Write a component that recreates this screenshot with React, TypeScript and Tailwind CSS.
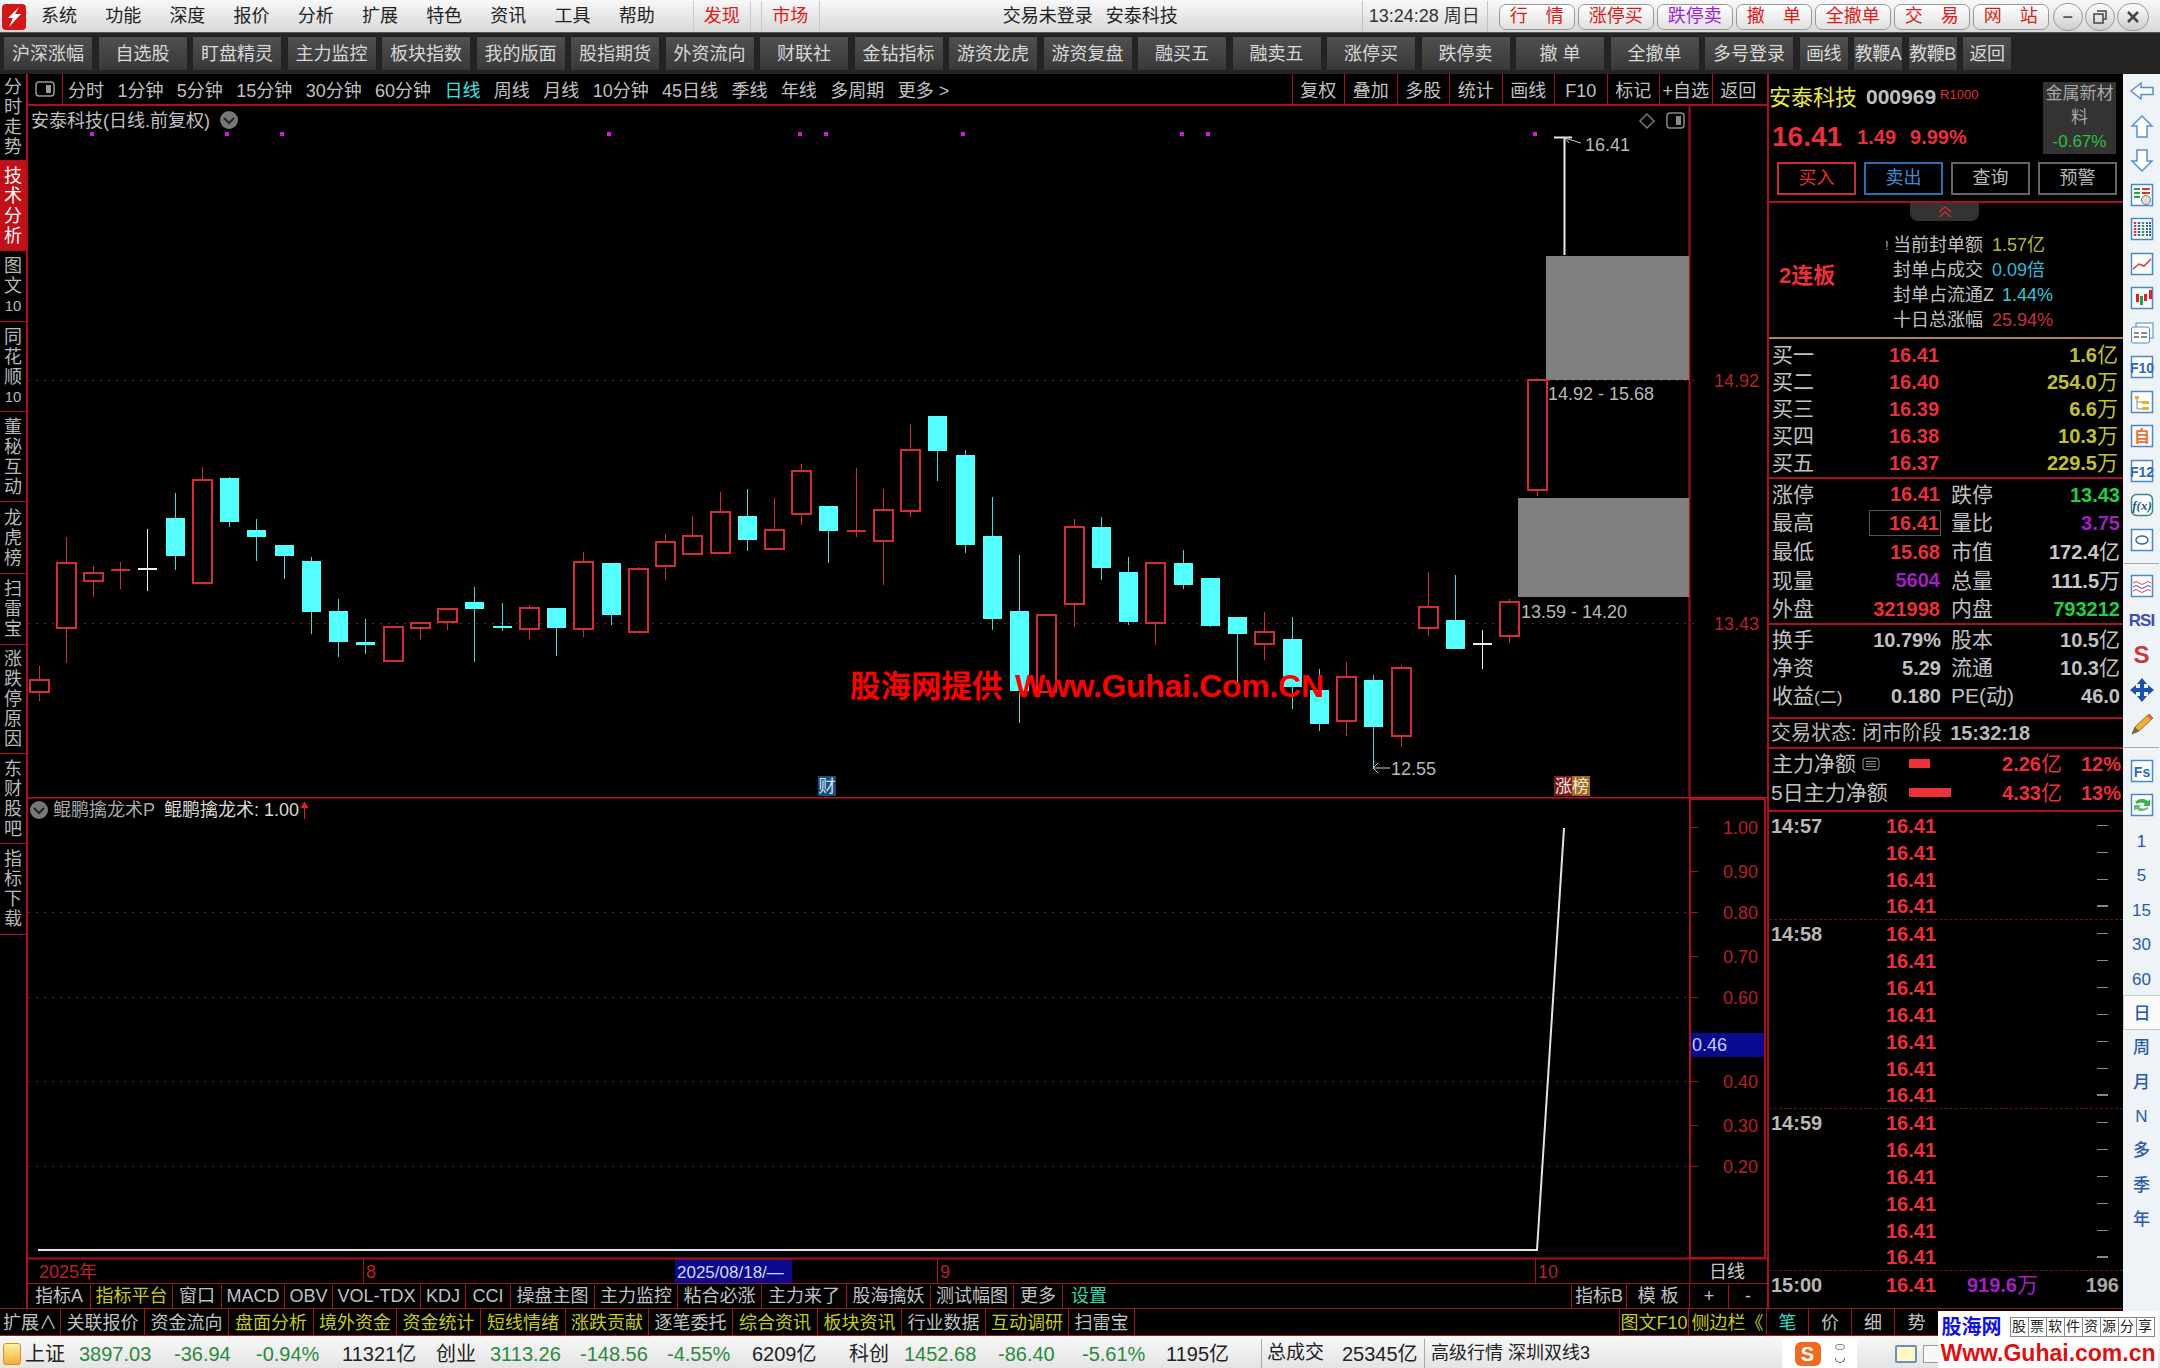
import React from "react";

const RED = "#a8121c";

const menus = ["系统", "功能", "深度", "报价", "分析", "扩展", "特色", "资讯", "工具", "帮助"];
const quick = [
  { t: "行　情", c: "text-[#e01818]" },
  { t: "涨停买", c: "text-[#e01818]" },
  { t: "跌停卖", c: "text-[#9a1fe0]" },
  { t: "撤　单", c: "text-[#e01818]" },
  { t: "全撤单", c: "text-[#e01818]" },
  { t: "交　易", c: "text-[#e01818]" },
  { t: "网　站", c: "text-[#e01818]" },
];
const tools = ["沪深涨幅", "自选股", "盯盘精灵", "主力监控", "板块指数", "我的版面", "股指期货", "外资流向", "财联社", "金钻指标", "游资龙虎", "游资复盘", "融买五", "融卖五", "涨停买", "跌停卖", "撤 单", "全撤单", "多号登录"];
const periods = ["分时", "1分钟", "5分钟", "15分钟", "30分钟", "60分钟", "日线", "周线", "月线", "10分钟", "45日线", "季线", "年线", "多周期", "更多 >"];
const chartTools = ["复权", "叠加", "多股", "统计", "画线", "F10", "标记", "+自选", "返回"];

const sideTabs = [
  { l: ["分", "时", "走", "势"], h: "h-[87px]" },
  { l: ["技", "术", "分", "析"], h: "h-[90px]", on: true },
  { l: ["图", "文", "10"], h: "h-[71px]" },
  { l: ["同", "花", "顺", "10"], h: "h-[90px]" },
  { l: ["董", "秘", "互", "动"], h: "h-[90px]" },
  { l: ["龙", "虎", "榜"], h: "h-[72px]" },
  { l: ["扫", "雷", "宝"], h: "h-[71px]" },
  { l: ["涨", "跌", "停", "原", "因"], h: "h-[109px]" },
  { l: ["东", "财", "股", "吧"], h: "h-[90px]" },
  { l: ["指", "标", "下", "载"], h: "h-[91px]" },
];

// [wickTop, bodyTop, bodyBottom, wickBottom, colour]
type Bar = [number, number, number, number, "r" | "c" | "w"];
const bars: Bar[] = [
  [666, 680, 692, 701, "r"], [537, 563, 628, 663, "r"], [566, 573, 581, 597, "r"], [562, 569, 571, 589, "r"],
  [529, 568, 569, 591, "w"], [493, 518, 556, 570, "c"], [467, 480, 583, 584, "r"], [477, 478, 522, 527, "c"],
  [519, 530, 537, 561, "c"], [545, 545, 556, 579, "c"], [557, 561, 612, 634, "c"], [599, 611, 642, 657, "c"],
  [619, 642, 645, 654, "c"], [627, 627, 661, 662, "r"], [623, 623, 628, 640, "r"], [609, 609, 622, 630, "r"],
  [587, 602, 609, 662, "c"], [603, 626, 628, 631, "c"], [605, 608, 629, 639, "r"], [608, 608, 628, 656, "c"],
  [552, 562, 629, 637, "r"], [563, 563, 615, 625, "c"], [567, 569, 632, 632, "r"], [534, 542, 566, 580, "r"],
  [516, 536, 554, 555, "r"], [492, 512, 553, 553, "r"], [489, 516, 540, 551, "c"], [498, 530, 549, 549, "r"],
  [464, 471, 514, 525, "r"], [506, 506, 531, 563, "c"], [468, 530, 532, 537, "r"], [489, 510, 541, 585, "r"],
  [424, 450, 511, 517, "r"], [416, 416, 451, 481, "c"], [450, 455, 545, 553, "c"], [497, 536, 619, 630, "c"],
  [555, 611, 691, 723, "c"], [615, 615, 692, 692, "r"], [519, 527, 604, 627, "r"], [517, 527, 568, 580, "c"],
  [557, 572, 622, 625, "c"], [563, 563, 623, 645, "r"], [550, 563, 585, 589, "c"], [578, 578, 626, 627, "c"],
  [617, 617, 634, 682, "c"], [612, 632, 644, 660, "r"], [617, 639, 687, 709, "c"], [669, 690, 724, 731, "c"],
  [662, 677, 721, 736, "r"], [675, 680, 727, 768, "c"], [665, 668, 736, 747, "r"], [572, 607, 628, 636, "r"],
  [575, 620, 649, 649, "c"], [630, 643, 644, 669, "w"], [599, 602, 636, 643, "r"], [378, 380, 490, 496, "r"],
];
const dots = [92, 227, 282, 609, 800, 826, 963, 1182, 1208, 1535];

const tabRow1 = [
  { t: "指标A", w: "w-[63px]" }, { t: "指标平台", w: "w-[82px]", c: "text-[#c8c820]" }, { t: "窗口", w: "w-[49px]" },
  { t: "MACD", w: "w-[63px]" }, { t: "OBV", w: "w-[48px]" }, { t: "VOL-TDX", w: "w-[88px]" }, { t: "KDJ", w: "w-[45px]" },
  { t: "CCI", w: "w-[45px]" }, { t: "操盘主图", w: "w-[84px]" }, { t: "主力监控", w: "w-[83px]" }, { t: "粘合必涨", w: "w-[84px]" },
  { t: "主力来了", w: "w-[85px]" }, { t: "股海擒妖", w: "w-[84px]" }, { t: "测试幅图", w: "w-[83px]" }, { t: "更多", w: "w-[49px]" },
];
const tabRow2 = [
  { t: "扩展∧", w: "w-[61px]" }, { t: "关联报价", w: "w-[84px]" }, { t: "资金流向", w: "w-[84px]" },
  { t: "盘面分析", w: "w-[85px]", y: true }, { t: "境外资金", w: "w-[83px]", y: true }, { t: "资金统计", w: "w-[84px]", y: true },
  { t: "短线情绪", w: "w-[85px]", y: true }, { t: "涨跌贡献", w: "w-[83px]", y: true }, { t: "逐笔委托", w: "w-[84px]" },
  { t: "综合资讯", w: "w-[85px]", y: true }, { t: "板块资讯", w: "w-[84px]", y: true }, { t: "行业数据", w: "w-[84px]" },
  { t: "互动调研", w: "w-[83px]", y: true }, { t: "扫雷宝", w: "w-[66px]" },
];

const bids = [
  ["买一", "16.41", "1.6", "亿"], ["买二", "16.40", "254.0", "万"], ["买三", "16.39", "6.6", "万"],
  ["买四", "16.38", "10.3", "万"], ["买五", "16.37", "229.5", "万"],
];
const quotes = [
  { a: "涨停", b: "16.41", ac: "text-[#e8303a]", c: "跌停", d: "13.43", dc: "text-[#20d040]" },
  { a: "最高", b: "16.41", ac: "text-[#e8303a]", c: "量比", d: "3.75", dc: "text-[#a020c0]", box: true },
  { a: "最低", b: "15.68", ac: "text-[#e8303a]", c: "市值", d: "172.4", u: "亿", dc: "text-[#c8c8c8]" },
  { a: "现量", b: "5604", ac: "text-[#a020c0]", c: "总量", d: "111.5", u: "万", dc: "text-[#c8c8c8]" },
  { a: "外盘", b: "321998", ac: "text-[#e8303a]", c: "内盘", d: "793212", dc: "text-[#20d040]" },
];
const ticks = [
  "14:57", "", "", "", "14:58", "", "", "", "", "", "", "14:59", "", "", "", "", "", "15:00",
];

function Ico({ children }: { children: React.ReactNode }) {
  return <svg width="26" height="26" viewBox="0 0 26 26">{children}</svg>;
}
function Frame() {
  return <rect x="2.5" y="2.5" width="21" height="21" fill="#fff" stroke="#4a86c8" strokeWidth="1.5" />;
}
function FrameText({ t }: { t: string }) {
  return (
    <Ico>
      <Frame />
      <text x="13" y="18.5" textAnchor="middle" fontSize="14" fontWeight="700" fill="#2a6ab8" fontFamily="Liberation Sans">{t}</text>
    </Ico>
  );
}

const sideIcons: React.ReactNode[] = [
  <Ico><path d="M2 13 L12 5 V9.5 H24 V16.5 H12 V21 Z" fill="#fff" stroke="#5a90d0" strokeWidth="1.5" /></Ico>,
  <Ico><path d="M13 3 L23 13 H18 V24 H8 V13 H3 Z" fill="#fff" stroke="#5a90d0" strokeWidth="1.5" /></Ico>,
  <Ico><path d="M13 24 L23 14 H18 V3 H8 V14 H3 Z" fill="#fff" stroke="#5a90d0" strokeWidth="1.5" /></Ico>,
  <Ico><Frame /><path d="M5 7h6M5 11h6M5 15h6" stroke="#2aa040" strokeWidth="2" /><path d="M13 7h8M13 11h8" stroke="#e03030" strokeWidth="2" /><circle cx="17" cy="18" r="4.5" fill="#ddd" stroke="#777" /></Ico>,
  <Ico><Frame /><path d="M6 6v14" stroke="#e03030" strokeWidth="2.5" strokeDasharray="2 1" /><path d="M10 6v14" stroke="#2a60c0" strokeWidth="2.5" strokeDasharray="2 1" /><path d="M14 6v14" stroke="#2aa040" strokeWidth="2.5" strokeDasharray="2 1" /><path d="M18 6v14M21 6v14" stroke="#2a60c0" strokeWidth="2" strokeDasharray="2 1" /></Ico>,
  <Ico><Frame /><path d="M4 18 L10 13 L15 15 L22 8" fill="none" stroke="#e03030" strokeWidth="1.5" /></Ico>,
  <Ico><Frame /><path d="M7 9h3v8H7zM15 9h3v7h-3z" fill="#e02020" /><path d="M11 11h3v9h-3z" fill="#20a040" /><path d="M20 5h3v9h-3z" fill="#e02020" /></Ico>,
  <Ico><rect x="7" y="3" width="17" height="15" fill="#fff" stroke="#4a86c8" /><rect x="2.5" y="7" width="18" height="16" rx="2" fill="#fff" stroke="#4a86c8" /><path d="M5 13h5M12 13h6M5 17h5M12 17h6" stroke="#888" strokeWidth="2" /></Ico>,
  <FrameText t="F10" />,
  <Ico><Frame /><path d="M6 7h4v3H6zM13 12h7v3h-7zM13 18h7v3h-7z" fill="#e0b030" /><path d="M8 10v10h5M8 13h5" fill="none" stroke="#888" /></Ico>,
  <Ico><Frame /><text x="13" y="19" textAnchor="middle" fontSize="16" fontWeight="700" fill="#f07030" fontFamily="Noto Sans CJK SC">自</text></Ico>,
  <FrameText t="F12" />,
  <Ico><rect x="2.5" y="2.5" width="21" height="21" rx="5" fill="#fff" stroke="#3a8a7a" strokeWidth="1.5" /><text x="13" y="18" textAnchor="middle" fontSize="13" fontStyle="italic" fontWeight="700" fill="#1a5a8a" fontFamily="Liberation Serif">f(x)</text></Ico>,
  <Ico><Frame /><ellipse cx="13" cy="13" rx="6" ry="4" fill="none" stroke="#2a6ab8" strokeWidth="1.5" /></Ico>,
];
const sideIcons2: React.ReactNode[] = [
  <Ico><Frame /><path d="M4 10 q3-3 6 0 t6 0 t6 0" fill="none" stroke="#e04040" /><path d="M4 14 q3-3 6 0 t6 0 t6 0" fill="none" stroke="#4040e0" /><path d="M4 18 q3-3 6 0 t6 0 t6 0" fill="none" stroke="#e04040" /></Ico>,
  <span className="text-[17px] font-bold tracking-[-1px] text-[#3a50b0]">RSI</span>,
  <span className="text-[24px] font-bold leading-none text-[#c83a3a]">S</span>,
  <Ico><path d="M13 1 L18 7 H15 V11 H19 V8 L25 13 L19 18 V15 H15 V19 H18 L13 25 L8 19 H11 V15 H7 V18 L1 13 L7 8 V11 H11 V7 H8 Z" fill="#1a50b0" /></Ico>,
  <Ico><path d="M3 23 L6 16 L20 3 L24 7 L10 20 Z" fill="#f0b030" stroke="#a06a20" /><path d="M20 3 L24 7 L22 9 L18 5 Z" fill="#e06060" /><path d="M3 23 L6 16 L10 20 Z" fill="#666" /></Ico>,
];
const sideIcons3: React.ReactNode[] = [
  <FrameText t="Fs" />,
  <Ico><Frame /><path d="M6 10 q6-6 13-1 l2-2 v7 h-7 l2-2 q-4-3-8 0z" fill="#40b050" /><path d="M20 16 q-6 6-13 1 l-2 2 v-6 h7 l-2 2 q4 3 8 0z" fill="#60c070" /></Ico>,
];
const sideText = ["1", "5", "15", "30", "60", "日", "周", "月", "N", "多", "季", "年"];

function Candles() {
  return (
    <>
      {bars.map((b, i) => {
        const x = Math.round(38.5 + 27.24 * i);
        const [top, bt, bb, bot, k] = b;
        const col = k === "r" ? "#d42c34" : k === "c" ? "#54ffff" : "#f0f0f0";
        const flat = bb - bt <= 3;
        return (
          <g key={i} shapeRendering="crispEdges">
            <line x1={x + 0.5} x2={x + 0.5} y1={top} y2={bot} stroke={k === "c" ? "#48d8d8" : col} strokeWidth="1.5" />
            {flat ? (
              <rect x={x - 9} y={bt} width={19} height={Math.max(bb - bt, 2)} fill={col} />
            ) : (
              <rect x={x - 9} y={bt} width={19} height={bb - bt} fill={k === "c" ? col : "#000"} stroke={k === "c" ? "none" : col} strokeWidth="1.5" />
            )}
          </g>
        );
      })}
    </>
  );
}

function MainChart() {
  return (
    <svg viewBox="28 106 1739 691" width="1739" height="691" className="block" fontFamily="Liberation Sans, Noto Sans CJK SC, sans-serif">
      <line x1="1689.5" x2="1689.5" y1="106" y2="797" stroke={RED} strokeWidth="2" />
      <line x1="28" x2="1700" y1="380.5" y2="380.5" stroke="#7a1a1a" strokeDasharray="2 6" />
      <line x1="28" x2="1700" y1="623.5" y2="623.5" stroke="#7a1a1a" strokeDasharray="2 6" />
      <rect x="1546" y="256" width="143" height="124" fill="#808080" />
      <rect x="1518" y="498" width="171" height="99" fill="#808080" />
      <Candles />
      <line x1="1564.5" x2="1564.5" y1="137" y2="255" stroke="#e8e8e8" strokeWidth="2" />
      <line x1="1554" x2="1572" y1="137.5" y2="137.5" stroke="#e8e8e8" strokeWidth="2" />
      <path d="M1581 143 L1565 138 M1570 137 L1565 138 L1569 143" stroke="#c8c8c8" fill="none" />
      <text x="1585" y="151" fontSize="18" fill="#b8b8b8">16.41</text>
      <text x="1548" y="400" fontSize="18" fill="#b8b8b8">14.92 - 15.68</text>
      <text x="1521" y="618" fontSize="18" fill="#b8b8b8">13.59 - 14.20</text>
      <path d="M1390 768 H1373 M1378 763 L1373 768 L1378 773" stroke="#c8c8c8" fill="none" />
      <text x="1391" y="775" fontSize="18" fill="#b8b8b8">12.55</text>
      <text x="1714" y="387" fontSize="18" fill="#b82028">14.92</text>
      <text x="1714" y="630" fontSize="18" fill="#b82028">13.43</text>
      {dots.map((x) => (
        <rect key={x} x={x - 2} y={132} width={4} height={4} fill="#e010e0" />
      ))}
      <text x="31" y="127" fontSize="18" fill="#c0c0c0">安泰科技(日线.前复权)</text>
      <circle cx="229" cy="120" r="9" fill="#777" />
      <path d="M224 118 L229 123 L234 118" fill="none" stroke="#222" strokeWidth="2" />
      <path d="M1647 114 L1654 121 L1647 128 L1640 121 Z" fill="none" stroke="#777" strokeWidth="1.5" />
      <rect x="1667" y="113" width="17" height="15" rx="3" fill="none" stroke="#888" strokeWidth="1.5" />
      <rect x="1676" y="116" width="5" height="9" fill="#888" />
      <rect x="818" y="776" width="18" height="20" fill="#1a4a80" />
      <text x="827" y="792" fontSize="17" textAnchor="middle" fill="#d8e8f8">财</text>
      <rect x="1554" y="776" width="18" height="20" fill="#7a1a1a" />
      <rect x="1572" y="776" width="18" height="20" fill="#a06a20" />
      <text x="1572" y="792" fontSize="17" textAnchor="middle" fill="#f0e8e0">涨榜</text>
      <text x="850" y="697" fontSize="30.5" fontWeight="700" fill="#ff0000" fontFamily="Noto Sans CJK SC, sans-serif">股海网提供</text>
      <text x="1015" y="697" fontSize="32" fontWeight="700" fill="#ff0000" textLength="309">Www.Guhai.Com.CN</text>
    </svg>
  );
}

function SubChart() {
  const levels = [
    [827, "1.00"], [871, "0.90"], [912, "0.80"], [956, "0.70"], [997, "0.60"], [1081, "0.40"], [1125, "0.30"], [1166, "0.20"],
  ] as [number, string][];
  return (
    <svg viewBox="28 797 1739 486" width="1739" height="486" className="block" fontFamily="Liberation Sans, Noto Sans CJK SC, sans-serif">
      <line x1="28" x2="1767" y1="797.5" y2="797.5" stroke="#c01420" strokeWidth="2" />
      <rect x="1690" y="799" width="75" height="459" fill="none" stroke={RED} strokeWidth="2" />
      <line x1="28" x2="1767" y1="1258.5" y2="1258.5" stroke={RED} strokeWidth="2" />
      {[912, 997, 1081, 1166].map((y) => (
        <line key={y} x1="28" x2="1689" y1={y + 0.5} y2={y + 0.5} stroke="#7a1a1a" strokeDasharray="2 6" />
      ))}
      {levels.map(([y, t]) => (
        <g key={t}>
          <line x1="1690" x2="1698" y1={y + 0.5} y2={y + 0.5} stroke={RED} />
          <text x="1723" y={y + 7} fontSize="18" fill="#b82028">{t}</text>
        </g>
      ))}
      <rect x="1691" y="1033" width="73" height="24" fill="#0a0a90" />
      <text x="1692" y="1051" fontSize="18" fill="#c8c8f0">0.46</text>
      <polyline points="38,1250 1537,1250 1564,828" fill="none" stroke="#e4e4e4" strokeWidth="2" />
      <circle cx="39" cy="810" r="9" fill="#777" />
      <path d="M34 808 L39 813 L44 808" fill="none" stroke="#222" strokeWidth="2" />
      <text x="53" y="816" fontSize="18" fill="#a8a8a8">鲲鹏擒龙术P</text>
      <text x="164" y="816" fontSize="18" fill="#d8d8d8">鲲鹏擒龙术: 1.00</text>
      <path d="M304.5 819 V804 M301 808 L304.5 802 L308 808" fill="#e02020" stroke="#e02020" />
      <text x="39" y="1278" fontSize="18" fill="#b82028">2025年</text>
      {[363, 937, 1535].map((x, i) => (
        <g key={x}>
          <line x1={x + 0.5} x2={x + 0.5} y1="1259" y2="1283" stroke={RED} />
          <text x={x + 3} y="1278" fontSize="18" fill="#b82028">{["8", "9", "10"][i]}</text>
        </g>
      ))}
      <rect x="675" y="1260" width="117" height="23" fill="#0a0a90" />
      <line x1="675" x2="792" y1="1259" y2="1259" stroke={RED} />
      <text x="677" y="1278" fontSize="17" fill="#d8d8f0">2025/08/18/—</text>
      <line x1="1690" x2="1690" y1="1259" y2="1283" stroke={RED} />
      <text x="1727" y="1278" fontSize="18" textAnchor="middle" fill="#c8c8c8">日线</text>
    </svg>
  );
}

function InfoPanel() {
  return (
    <div className="flex w-[356px] flex-col border-l-2 border-[#a8121c] bg-black">
      <div className="h-[129px] border-b-2 border-[#a8121c]">
        <div className="flex h-[88px]">
          <div className="w-[274px]">
            <div className="flex h-[46px] items-center">
              <span className="text-[22px] text-[#e8e840]">安泰科技</span>
              <span className="ml-[9px] text-[21px] font-bold text-[#c0c0c0]">000969</span>
              <span className="mb-[4px] ml-[4px] text-[13px] text-[#e03030]">R1000</span>
            </div>
            <div className="flex h-[34px] items-center font-bold text-[#e8303a]">
              <span className="ml-[3px] text-[28px]">16.41</span>
              <span className="ml-[15px] text-[20px]">1.49</span>
              <span className="ml-[14px] text-[20px]">9.99%</span>
            </div>
          </div>
          <div className="mt-[8px] flex h-[72px] w-[73px] flex-col items-center bg-[#333] text-[17px] leading-[24px] text-[#a8a8a8]">
            <span>金属新材</span>
            <span>料</span>
            <span className="text-[#2ec040]">-0.67%</span>
          </div>
        </div>
        <div className="flex gap-[8px] pl-[8px] text-[18px]">
          <div className="flex h-[33px] w-[79px] items-center justify-center border-2 border-[#c83030] text-[#e03030]">买入</div>
          <div className="flex h-[33px] w-[79px] items-center justify-center border-2 border-[#2a70b0] text-[#3a90d8]">卖出</div>
          <div className="flex h-[33px] w-[79px] items-center justify-center border-2 border-[#666] text-[#b8b8b8]">查询</div>
          <div className="flex h-[33px] w-[79px] items-center justify-center border-2 border-[#666] text-[#b8b8b8]">预警</div>
        </div>
      </div>
      <div className="relative flex h-[136px] border-b-2 border-[#a88850]">
        <div className="absolute left-[141px] top-0 flex h-[18px] w-[69px] items-center justify-center rounded-b-lg bg-[#333]">
          <svg width="16" height="12" viewBox="0 0 16 12">
            <path d="M2 6 L8 1 L14 6 M2 11 L8 6 L14 11" fill="none" stroke="#c83030" strokeWidth="1.5" />
          </svg>
        </div>
        <div className="w-[124px] pl-[10px] pt-[60px] text-[22px] font-bold leading-[26px] text-[#e8303a]">2连板</div>
        <div className="pt-[30px] text-[18px] leading-[25px] text-[#c0c0c0]">
          <div className="relative">
            <span className="absolute -left-[8px] text-[13px] text-[#b0b0b0]">!</span>
            当前封单额<span className="ml-[9px] text-[#b8b830]">1.57亿</span>
          </div>
          <div>封单占成交<span className="ml-[9px] text-[#30b8d8]">0.09倍</span></div>
          <div>封单占流通Z<span className="ml-[8px] text-[#30c8d8]">1.44%</span></div>
          <div>十日总涨幅<span className="ml-[9px] text-[#c83038]">25.94%</span></div>
        </div>
      </div>
      <div className="h-[140px] border-b-2 border-[#a8121c] pt-[2px]">
        {bids.map((b) => (
          <div key={b[0]} className="flex h-[27px] items-center">
            <span className="w-[120px] pl-[3px] text-[21px] text-[#c0c0c0]">{b[0]}</span>
            <span className="w-[50px] text-right text-[20px] font-bold text-[#e8303a]">{b[1]}</span>
            <span className="w-[179px] text-right text-[20px] font-bold text-[#c0c030]">
              {b[2]}<span className="text-[21px] font-normal">{b[3]}</span>
            </span>
          </div>
        ))}
      </div>
      <div className="h-[146px] border-b-2 border-[#a8121c] pt-[1px]">
        {quotes.map((q) => (
          <div key={q.a} className="flex h-[28.7px] items-center">
            <span className="w-[100px] pl-[3px] text-[21px] text-[#c0c0c0]">{q.a}</span>
            <span className={`flex h-[26px] w-[72px] items-center justify-end pr-[1px] text-[20px] font-bold ${q.ac} ${q.box ? "border border-[#555]" : ""}`}>{q.b}</span>
            <span className="w-[10px]" />
            <span className="w-[60px] text-[21px] text-[#c0c0c0]">{q.c}</span>
            <span className={`w-[109px] text-right text-[20px] font-bold ${q.dc}`}>
              {q.d}<span className="text-[21px] font-normal">{q.u}</span>
            </span>
          </div>
        ))}
      </div>
      <div className="h-[94px] border-b-2 border-[#a8121c] pt-[1px]">
        {[
          ["换手", "10.79%", "股本", "10.5", "亿"],
          ["净资", "5.29", "流通", "10.3", "亿"],
          ["收益", "0.180", "PE(动)", "46.0", ""],
        ].map((r, i) => (
          <div key={r[0]} className="flex h-[28px] items-center text-[#c0c0c0]">
            <span className="w-[100px] pl-[3px] text-[21px]">
              {r[0]}{i === 2 && <span className="text-[17px]">(二)</span>}
            </span>
            <span className="w-[72px] text-right text-[20px] font-bold">{r[1]}</span>
            <span className="w-[10px]" />
            <span className="w-[60px] whitespace-nowrap text-[21px]">{r[2]}</span>
            <span className="w-[109px] text-right text-[20px] font-bold">
              {r[3]}<span className="text-[21px] font-normal">{r[4]}</span>
            </span>
          </div>
        ))}
      </div>
      <div className="flex h-[30px] items-center border-b-2 border-[#a8121c] pl-[2px] text-[20px] text-[#b8b8b8]">
        交易状态: 闭市阶段<span className="ml-[8px] font-bold">15:32:18</span>
      </div>
      <div className="h-[63px] border-b-2 border-[#a8121c]">
        <div className="flex h-[29px] items-center">
          <span className="flex w-[140px] items-center pl-[3px] text-[21px] text-[#c0c0c0]">
            主力净额
            <svg width="18" height="14" viewBox="0 0 18 14" className="ml-[6px]">
              <rect x="1" y="1" width="16" height="12" rx="3" fill="none" stroke="#999" />
              <path d="M4 4.5h10M4 7h10M4 9.5h10" stroke="#999" />
            </svg>
          </span>
          <span className="h-[9px] w-[21px] bg-[#f03038]" />
          <span className="w-[132px] text-right text-[20px] font-bold text-[#e8303a]">2.26<span className="text-[21px] font-normal">亿</span></span>
          <span className="w-[59px] text-right text-[20px] font-bold text-[#e8303a]">12%</span>
        </div>
        <div className="flex h-[29px] items-center">
          <span className="w-[140px] pl-[2px] text-[21px] text-[#c0c0c0]">5日主力净额</span>
          <span className="h-[9px] w-[42px] bg-[#f03038]" />
          <span className="w-[111px] text-right text-[20px] font-bold text-[#e8303a]">4.33<span className="text-[21px] font-normal">亿</span></span>
          <span className="w-[59px] text-right text-[20px] font-bold text-[#e8303a]">13%</span>
        </div>
      </div>
      <div className="flex-1 overflow-hidden">
        {ticks.map((t, i) => (
          <div key={i} className={`flex h-[27px] items-center text-[20px] font-bold ${i === 3 || i === 10 || i === 16 ? "border-b border-dashed border-[#6a1414]" : ""}`}>
            <span className="w-[117px] pl-[2px] text-[#b8b8b8]">{t}</span>
            <span className="w-[50px] text-[#e8303a]">16.41</span>
            {i === 17 ? (
              <>
                <span className="w-[102px] text-right text-[#a020c0]">919.6<span className="text-[21px] font-normal">万</span></span>
                <span className="w-[81px] text-right text-[#a8a8a8]">196</span>
              </>
            ) : (
              <span className="ml-[161px] h-[1.5px] w-[11px] bg-[#888]" />
            )}
          </div>
        ))}
      </div>
    </div>
  );
}

function SideBar() {
  return (
    <div className="flex w-[37px] flex-col items-center bg-[#eef3f8]">
      {sideIcons.map((c, i) => (
        <div key={i} className="flex h-[34.5px] w-full items-center justify-center">{c}</div>
      ))}
      <div className="flex h-[12px] w-full items-center px-[1px]"><div className="h-px w-full bg-[#aaa]" /></div>
      {sideIcons2.map((c, i) => (
        <div key={i} className="flex h-[34.5px] w-full items-center justify-center">{c}</div>
      ))}
      <div className="flex h-[12px] w-full items-center px-[1px]"><div className="h-px w-full bg-[#aaa]" /></div>
      {sideIcons3.map((c, i) => (
        <div key={i} className="flex h-[34.5px] w-full items-center justify-center">{c}</div>
      ))}
      <div className="h-[1px] w-full" />
      {sideText.map((t) => (
        <div key={t} className={`flex h-[34.4px] w-full items-center justify-center pt-[2px] text-[17px] font-medium text-[#2a5aa8] ${t === "日" ? "border-y border-l border-[#c8c8c8] bg-[#fafafa]" : ""}`}>{t}</div>
      ))}
    </div>
  );
}

export default function App() {
  return (
    <div className="relative flex h-[1368px] w-[2160px] flex-col overflow-hidden bg-black font-['Liberation_Sans','Noto_Sans_CJK_SC',sans-serif]">
      {/* title bar */}
      <div className="flex h-[33px] items-center border-b border-[#555] bg-gradient-to-b from-[#f8f8f8] to-[#d8d8d8] pt-[1px] text-[18px] text-[#222]">
        <svg width="24" height="26" viewBox="0 0 24 26" className="ml-[2px]">
          <rect width="24" height="26" rx="4" fill="#d01818" />
          <path d="M17 3 L6 14 H11 L7 23 L19 10 H13 Z" fill="#fff" />
        </svg>
        <div className="ml-[15px] flex gap-[28.2px]">
          {menus.map((m) => <span key={m}>{m}</span>)}
        </div>
        <div className="ml-[38px] flex h-full w-[58px] items-center justify-center border-x border-[#c8c8c8] text-[#e01818]">发现</div>
        <div className="ml-[10px] flex h-full w-[59px] items-center justify-center border-x border-[#c8c8c8] text-[#e01818]">市场</div>
        <span className="ml-[183px]">交易未登录</span>
        <span className="ml-[13px]">安泰科技</span>
        <div className="ml-[184px] flex h-full w-[126px] items-center border-x border-[#c0c0c0] pl-[6px] text-[#333]">13:24:28 周日</div>
        <div className="ml-[11px] flex gap-[3px]">
          {quick.map((q) => (
            <div key={q.t} className={`flex h-[26px] w-[76px] items-center justify-center rounded-[7px] border border-[#999] bg-gradient-to-b from-white to-[#e0e0e0] ${q.c}`}>{q.t}</div>
          ))}
        </div>
        <div className="ml-[4px] flex gap-[2px] text-[#555]">
          <div className="flex h-[28px] w-[30px] items-center justify-center rounded-full border border-[#999] bg-gradient-to-b from-white to-[#ccc] font-bold">–</div>
          <div className="flex h-[28px] w-[30px] items-center justify-center rounded-full border border-[#999] bg-gradient-to-b from-white to-[#ccc]">
            <svg width="14" height="14" viewBox="0 0 14 14"><path d="M4 1h9v8h-3M1 4h9v9H1z" fill="none" stroke="#444" strokeWidth="1.5" /></svg>
          </div>
          <div className="flex h-[28px] w-[32px] items-center justify-center rounded-full border border-[#999] bg-gradient-to-b from-white to-[#ccc]">
            <svg width="14" height="14" viewBox="0 0 14 14"><path d="M2 2 L12 12 M12 2 L2 12" stroke="#444" strokeWidth="2.5" /></svg>
          </div>
        </div>
      </div>

      {/* quick toolbar */}
      <div className="flex h-[41px] items-center gap-[4.5px] bg-[#242424] pl-[3px] text-[18px] text-[#d8d8d8]">
        {tools.map((t) => (
          <div key={t} className="flex h-[35px] w-[90px] items-center justify-center rounded-[2px] bg-gradient-to-b from-[#505050] to-[#383838] pt-[2px] shadow-[inset_0_0_0_1px_#222]">{t}</div>
        ))}
        {["画线", "教鞭A", "教鞭B", "返回"].map((t) => (
          <div key={t} className="flex h-[35px] w-[50px] items-center justify-center whitespace-nowrap rounded-[2px] bg-gradient-to-b from-[#505050] to-[#383838] pt-[2px] shadow-[inset_0_0_0_1px_#222] tracking-[-0.5px]">{t}</div>
        ))}
      </div>

      {/* workspace */}
      <div className="flex flex-1">
        <div className="flex w-[2123px] flex-col">
          <div className="flex h-[1234px]">
            <div className="flex w-[28px] flex-col border-r-2 border-[#a8121c] bg-black text-[18px] leading-[20px] text-[#b8b8b8]">
              {sideTabs.map((s) => (
                <div key={s.l.join("")} className={`flex flex-col items-center justify-center border-b border-[#a8121c] ${s.h} ${s.on ? "bg-[#c01018] text-white" : ""}`}>
                  {s.l.map((c) => <span key={c} className={c.length > 1 ? "text-[15px]" : ""}>{c}</span>)}
                </div>
              ))}
            </div>
            <div className="flex w-[1739px] flex-col">
              <div className="flex h-[32px] items-center border-b-2 border-[#a8121c] text-[18px] text-[#c0c0c0]">
                <div className="flex h-full w-[35px] items-center justify-center border-r border-[#a8121c]">
                  <svg width="20" height="16" viewBox="0 0 20 16"><rect x="1" y="1" width="18" height="14" rx="3" fill="none" stroke="#999" strokeWidth="1.5" /><rect x="11" y="4" width="5" height="8" fill="#999" /></svg>
                </div>
                <div className="ml-[5px] flex gap-[13.4px] whitespace-nowrap pt-[4px]">
                  {periods.map((p) => <span key={p} className={p === "日线" ? "text-[#40e0e0]" : ""}>{p}</span>)}
                </div>
                <div className="ml-auto flex h-full pr-[3px]">
                  {chartTools.map((t) => (
                    <div key={t} className="flex w-[52.5px] items-center justify-center whitespace-nowrap border-l border-[#a8121c] pt-[4px]">{t}</div>
                  ))}
                </div>
              </div>
              <MainChart />
              <SubChart />
              <div className="flex h-[25px] items-center border-t border-[#a8121c] pt-[1px] text-[18px] text-[#c0c0c0]">
                {tabRow1.map((t) => (
                  <div key={t.t} className={`flex h-full items-center justify-center whitespace-nowrap border-r border-[#a8121c] ${t.w} ${t.c ?? ""}`}>{t.t}</div>
                ))}
                <span className="ml-[8px] text-[#30d8a0]">设置</span>
                <div className="ml-auto flex h-full">
                  <div className="flex w-[55px] items-center justify-center border-l border-[#a8121c]">指标B</div>
                  <div className="flex w-[63px] items-center justify-center border-l border-[#a8121c]">模 板</div>
                  <div className="flex w-[39px] items-center justify-center border-l border-[#a8121c]">+</div>
                  <div className="flex w-[39px] items-center justify-center border-l border-[#a8121c]">-</div>
                </div>
              </div>
            </div>
            <InfoPanel />
          </div>
          <div className="flex h-[28px] items-center border-y border-[#a8121c] text-[18px] text-[#c0c0c0]">
            {tabRow2.map((t) => (
              <div key={t.t} className={`flex h-full items-center justify-center whitespace-nowrap border-r border-[#a8121c] pt-[3px] ${t.w} ${t.y ? "text-[#c8c820]" : ""}`}>{t.t}</div>
            ))}
            <div className="ml-[484px] flex h-full w-[69px] items-center justify-center whitespace-nowrap border-l border-[#a8121c] pt-[3px] text-[#c8c820]">图文F10</div>
            <div className="flex h-full w-[79px] items-center justify-center whitespace-nowrap border-x border-[#a8121c] pt-[3px] text-[#c8c820]">侧边栏《</div>
            <div className="flex h-full w-[42px] items-center justify-center border-r border-[#a8121c] pt-[3px] text-[#30d8c0]">笔</div>
            <div className="flex h-full w-[43px] items-center justify-center border-r border-[#a8121c] pt-[3px]">价</div>
            <div className="flex h-full w-[43px] items-center justify-center border-r border-[#a8121c] pt-[3px]">细</div>
            <div className="flex h-full w-[43px] items-center justify-center pt-[3px]">势</div>
          </div>
        </div>
        <SideBar />
      </div>

      {/* status bar */}
      <div className="flex h-[32px] items-center whitespace-nowrap bg-gradient-to-b from-[#f8f8f8] to-[#e4e4e4] pt-[3px] text-[20px] text-[#222]">
        <div className="ml-[3px] h-[22px] w-[18px] rounded-[3px] border border-[#d89020] bg-gradient-to-b from-[#fff0a0] to-[#f0b030]" />
        <span className="ml-[4px] w-[54px]">上证</span>
        <span className="w-[95px] text-[#2a8a3a]">3897.03</span>
        <span className="w-[82px] text-[#2a8a3a]">-36.94</span>
        <span className="w-[86px] text-[#2a8a3a]">-0.94%</span>
        <span className="w-[94px]">11321亿</span>
        <span className="w-[54px]">创业</span>
        <span className="w-[90px] text-[#2a8a3a]">3113.26</span>
        <span className="w-[87px] text-[#2a8a3a]">-148.56</span>
        <span className="w-[85px] text-[#2a8a3a]">-4.55%</span>
        <span className="w-[97px]">6209亿</span>
        <span className="w-[55px]">科创</span>
        <span className="w-[94px] text-[#2a8a3a]">1452.68</span>
        <span className="w-[84px] text-[#2a8a3a]">-86.40</span>
        <span className="w-[84px] text-[#2a8a3a]">-5.61%</span>
        <span className="w-[95px]">1195亿</span>
        <div className="flex h-full w-[163px] items-center border-l border-[#aaa] pl-[5px]">
          <span className="w-[75px] text-[19px]">总成交</span>
          <span>25345亿</span>
        </div>
        <div className="flex h-full w-[358px] items-center border-l border-[#aaa] pl-[6px] text-[18px]">高级行情 深圳双线3</div>
        <div className="flex h-full w-[75px] items-center justify-center gap-[14px] bg-white">
          <div className="flex h-[24px] w-[26px] items-center justify-center rounded-[6px] bg-[#f06a20] text-[20px] font-bold text-white">S</div>
          <div className="flex flex-col gap-[8px]">
            <div className="h-[6px] w-[10px] rounded-full border border-[#888]" />
            <div className="h-[5px] w-[10px] rounded-b-full border-x border-b border-[#555]" />
          </div>
        </div>
        <div className="ml-[38px] h-[18px] w-[22px] rounded-[2px] border-2 border-[#6a90c0] bg-[#fff8c0]" />
        <div className="ml-[6px] h-[18px] w-[16px] border border-[#999] bg-[#f8f8f8]" />
      </div>

      {/* site watermark */}
      <div className="absolute bottom-0 right-[2px] flex h-[57px] w-[220px] flex-col items-center justify-center bg-white">
        <div className="flex items-center">
          <span className="text-[20px] font-bold leading-[26px] text-[#1010e0]">股海网</span>
          <div className="ml-[8px] flex border-y border-l border-[#888] font-['Liberation_Serif','Noto_Sans_CJK_SC',serif] text-[14px] leading-[18px] text-[#222]">
            {["股", "票", "软", "件", "资", "源", "分", "享"].map((c) => (
              <span key={c} className="w-[18px] border-r border-[#888] text-center">{c}</span>
            ))}
          </div>
        </div>
        <span className="text-[23px] font-bold leading-[26px] text-[#e01010]">Www.Guhai.com.cn</span>
      </div>
    </div>
  );
}
